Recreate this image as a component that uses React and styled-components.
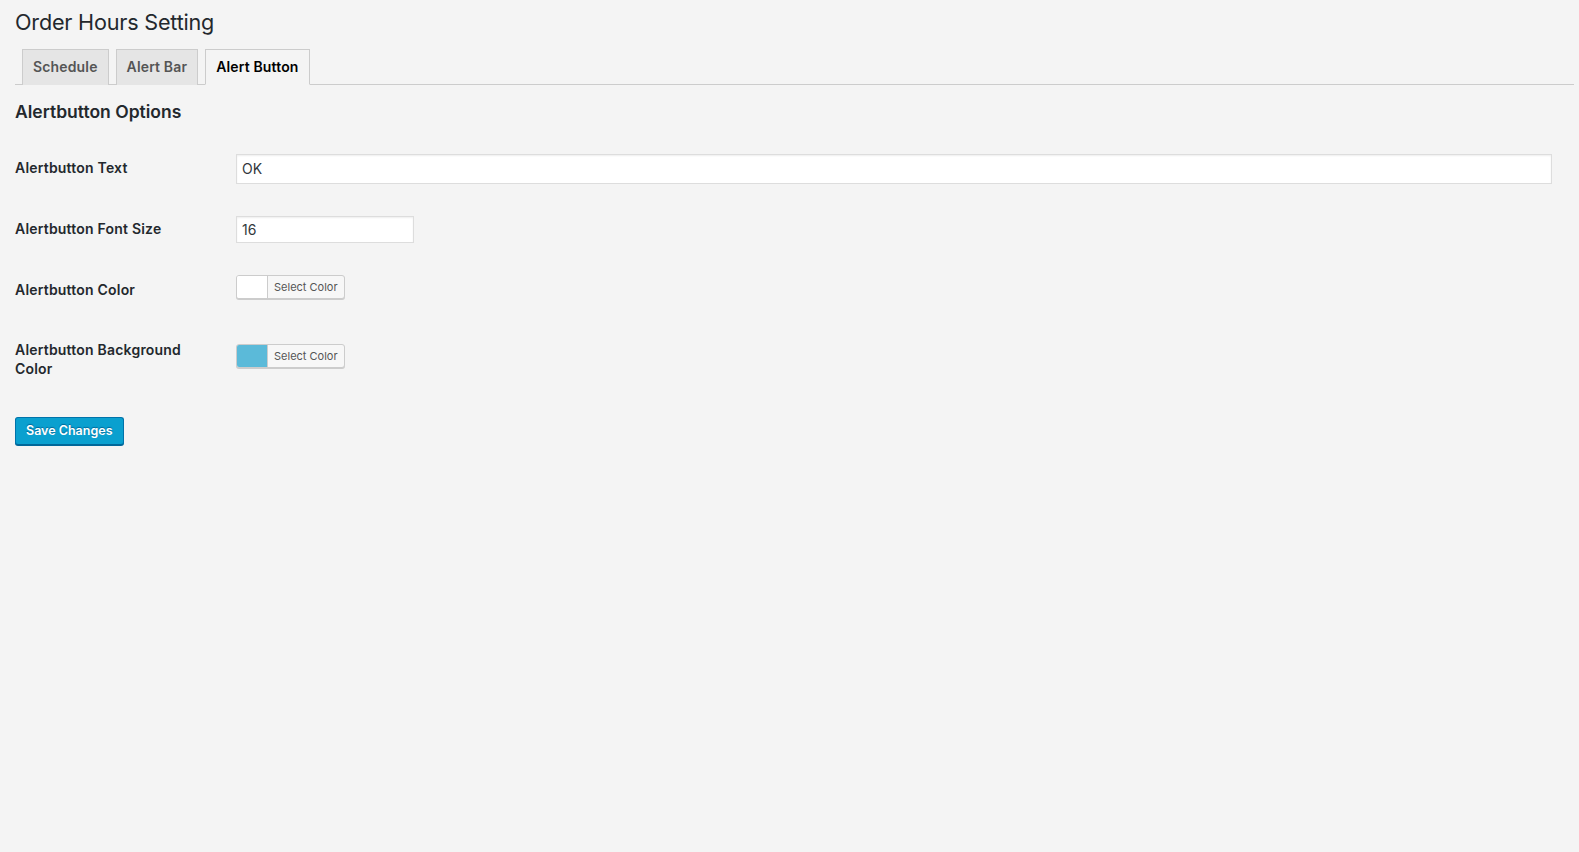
import React from "react";
import styled, { createGlobalStyle } from "styled-components";

const Global = createGlobalStyle`
  html, body {
    margin: 0;
    padding: 0;
    background: #f4f4f4;
  }
  body {
    min-height: 852px;
    font-family: Inter, "Noto Sans", "Liberation Sans", sans-serif;
    color: #23282d;
  }
`;

const Page = styled.div`
  padding: 0 5px 0 15px;
`;

const Title = styled.h1`
  margin: 0;
  padding-top: 7px;
  font-size: 21.6px;
  font-weight: 400;
  line-height: 30px;
  color: #23282d;
  letter-spacing: -0.2px;
`;

const TabBar = styled.nav`
  display: flex;
  margin-top: 12px;
  border-bottom: 1px solid #ccc;
`;

const Tab = styled.a`
  display: block;
  margin-left: 7px;
  margin-bottom: -1px;
  padding: 5px 10px;
  font-size: 14px;
  font-weight: 600;
  line-height: 24px;
  border: 1px solid #ccc;
  border-bottom: ${(p) => (p.$active ? "1px solid #f4f4f4" : "none")};
  background: ${(p) => (p.$active ? "#f4f4f4" : "#e5e5e5")};
  color: ${(p) => (p.$active ? "#000" : "#555")};
  text-decoration: none;
  letter-spacing: 0.15px;
  cursor: pointer;
`;

const SectionTitle = styled.h2`
  margin: 15px 0 15px;
  font-size: 17.5px;
  font-weight: 600;
  line-height: 23px;
  color: #23282d;
`;

const Row = styled.div`
  display: flex;
  height: ${(p) => p.$h}px;
`;

const Label = styled.label`
  width: 196px;
  flex: none;
  padding: 20px 25px 0 0;
  font-size: 14px;
  font-weight: 600;
  line-height: 19px;
  letter-spacing: 0.2px;
  color: #23282d;
`;

const Field = styled.div`
  flex: 1;
  display: flex;
  align-items: center;
  padding-right: 22px;
`;

const TextInput = styled.input`
  box-sizing: border-box;
  width: ${(p) => (p.$wide ? "100%" : "178px")};
  height: ${(p) => p.$h}px;
  margin: 0;
  padding: 0 5px;
  border: 1px solid #ddd;
  box-shadow: inset 0 1px 2px rgba(0, 0, 0, 0.07);
  background: #fff;
  color: #32373c;
  font-family: Inter, "Noto Sans", sans-serif;
  font-size: 14px;
  outline: none;
`;

const ColorButton = styled.button`
  display: flex;
  align-items: stretch;
  height: 24px;
  margin: 0 0 6px;
  padding: 0;
  border: 1px solid #ccc;
  border-radius: 3px;
  background: #f7f7f7;
  box-shadow: 0 1px 0 #ccc;
  overflow: hidden;
  cursor: pointer;
`;

const Swatch = styled.span`
  width: 30px;
  background: ${(p) => p.$color};
  border-right: 1px solid #ccc;
`;

const SwatchText = styled.span`
  display: flex;
  align-items: center;
  padding: 0 6px 0 6px;
  font-family: Inter, "Noto Sans", sans-serif;
  font-size: 11px;
  color: #555;
`;

const Submit = styled.div`
  margin-top: 20px;
`;

const SaveButton = styled.button`
  height: 28px;
  padding: 0 10px 1px;
  border: 1px solid #0073aa;
  border-bottom-color: #006799;
  border-radius: 3px;
  background: #0aa0cf;
  box-shadow: 0 1px 0 #006799;
  color: #fff;
  font-family: Inter, "Noto Sans", sans-serif;
  font-size: 12.5px;
  font-weight: 600;
  line-height: 26px;
  text-shadow: 0 -1px 1px #006799;
  cursor: pointer;
`;

export default function App() {
  return (
    <Page>
      <Global />
      <Title>Order Hours Setting</Title>
      <TabBar>
        <Tab>Schedule</Tab>
        <Tab>Alert Bar</Tab>
        <Tab $active>Alert Button</Tab>
      </TabBar>
      <SectionTitle>Alertbutton Options</SectionTitle>
      <Row $h={61}>
        <Label>Alertbutton Text</Label>
        <Field>
          <TextInput $wide $h={30} defaultValue="OK" />
        </Field>
      </Row>
      <Row $h={61}>
        <Label>Alertbutton Font Size</Label>
        <Field>
          <TextInput $h={27} defaultValue="16" />
        </Field>
      </Row>
      <Row $h={60}>
        <Label>Alertbutton Color</Label>
        <Field>
          <ColorButton>
            <Swatch $color="#ffffff" />
            <SwatchText>Select Color</SwatchText>
          </ColorButton>
        </Field>
      </Row>
      <Row $h={77}>
        <Label>Alertbutton Background Color</Label>
        <Field>
          <ColorButton>
            <Swatch $color="#5bbad9" />
            <SwatchText>Select Color</SwatchText>
          </ColorButton>
        </Field>
      </Row>
      <Submit>
        <SaveButton>Save Changes</SaveButton>
      </Submit>
    </Page>
  );
}
